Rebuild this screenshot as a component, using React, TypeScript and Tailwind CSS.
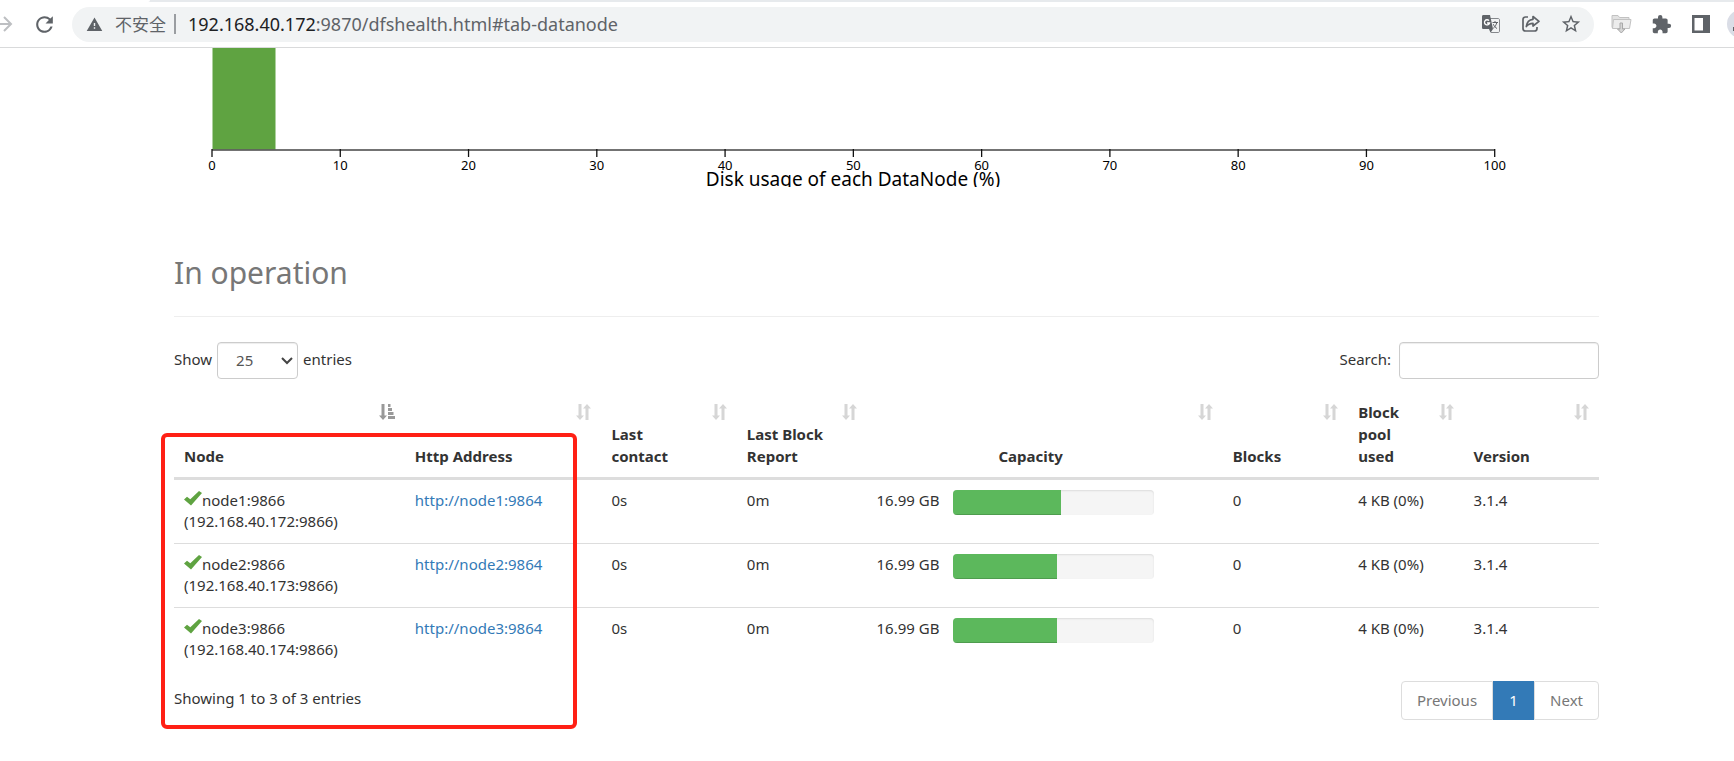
import React from "react";
import { MdExtension, MdRefresh, MdStarOutline, MdWarning } from "react-icons/md";

type NodeRow = { name: string; ip: string; used: number };

const nodes: NodeRow[] = [
  { name: "node1", ip: "192.168.40.172", used: 54 },
  { name: "node2", ip: "192.168.40.173", used: 52 },
  { name: "node3", ip: "192.168.40.174", used: 52 },
];

const columns = [
  { label: "Node", width: "w-[16.2%]", sorted: true },
  { label: "Http Address", width: "w-[13.8%]" },
  { label: "Last contact", width: "w-[9.5%]" },
  { label: "Last Block Report", width: "w-[9.1%]" },
  { label: "Capacity", width: "w-[25%]", center: true },
  { label: "Blocks", width: "w-[8.8%]" },
  { label: "Block pool used", width: "w-[8.1%]" },
  { label: "Version", width: "w-[9.5%]" },
];

function ForwardIcon() {
  return (
    <svg width="14" height="18" viewBox="0 0 14 18" fill="none" stroke="#bdbfc2" strokeWidth="2">
      <path d="M0 9h11M4 2l7 7-7 7" />
    </svg>
  );
}

function TranslateIcon() {
  return (
    <svg width="18" height="18" viewBox="0 0 18 18" fill="none">
      <path d="M8 3.500h8c1 0 1.500.5 1.500 1.500v11c0 1-.5 1.500-1.500 1.500H9" stroke="#85888c" />
      <path d="M1.500 0H8l3 14H1.500C.5 14 0 13.500 0 12.500v-11C0 .5.500 0 1.500 0z" fill="#5f6368" />
      <path d="M7 14h4l-2.500 3.800z" fill="#5f6368" />
      <path d="M7 5.600A2.600 2.600 0 1 0 7.600 8H5" stroke="#fff" strokeWidth="1.300" />
      <path d="M10.500 7.500H16M13 6v1.500M14.800 7.500C14.200 10 13 12 11.200 13.300M11.300 9.200c.7 1.800 2 3.300 3.700 4.300" stroke="#5f6368" />
    </svg>
  );
}

function ShareIcon() {
  return (
    <svg width="18" height="18" viewBox="0 0 18 18" fill="none" stroke="#5f6368" strokeWidth="1.700" strokeLinejoin="round">
      <path d="M6 2H3.500C2 2 1 3 1 4.500v9C1 15.200 2 16 3.500 16h9c1.500 0 2.500-.8 2.500-2.500V12" />
      <path d="M11 1.500 17 6.300 11 11V8.300C8 8.300 6 9.200 4.300 11.500 4.800 7.500 7 4.700 11 4.300Z" />
    </svg>
  );
}

function FolderDownloadIcon() {
  return (
    <svg width="21" height="20" viewBox="0 0 21 20">
      <path d="M1 1.500h6l1.500 2H18v10H1z" fill="#e2e2e2" stroke="#c2c2c2" />
      <path d="M2.500 5.500H20l-1.500 9H1.500z" fill="#ececec" stroke="#c2c2c2" />
      <path d="M9 9h2.500v6H14l-3.700 4L6.500 15H9z" fill="#d5d5d5" stroke="#a8a8a8" />
    </svg>
  );
}

function SidePanelIcon() {
  return (
    <svg width="18" height="18" viewBox="0 0 18 18">
      <path fillRule="evenodd" d="M0 0h18v18H0zM2.500 3v12.500H11V3z" fill="#5f6368" />
    </svg>
  );
}

function SortIcon() {
  return (
    <svg width="15" height="16" viewBox="0 0 15 16" fill="#d6d6d6">
      <path d="M2.500 0h3v11.500H8L4 16 0 11.500h2.500z" />
      <path d="M9.500 16h3V4.500H15L11 0 7 4.500h2.500z" />
    </svg>
  );
}

function SortedIcon() {
  return (
    <svg width="16" height="16" viewBox="0 0 16 16" fill="#999">
      <path d="M2.500 0h3v11.500H8L4 16 0 11.500h2.500z" />
      <path d="M9 0h2.500v3H9zM9 4h4v3H9zM9 8h5.500v3H9zM9 12h7v3H9z" />
    </svg>
  );
}

function CheckIcon() {
  return (
    <svg className="inline-block align-baseline" width="18" height="15" viewBox="0 0 18 15">
      <path d="M0 8.500 3 5.700 6.300 8.300 15 0 18 2 7 14.500z" fill="#5fa341" />
    </svg>
  );
}

function BrowserBar() {
  return (
    <header className="overflow-hidden">
      <div className="h-[2px] bg-[#e7eaed]">
        <div className="h-full w-[150px] rounded-br bg-white" />
      </div>
      <div className="flex h-[46px] items-center border-b border-[#d9dadb] bg-white pb-px text-[#5f6368]">
        <button aria-label="Forward" className="w-[14px] shrink-0">
          <ForwardIcon />
        </button>
        <button aria-label="Reload" className="flex w-[58px] shrink-0 justify-center pl-[2px]">
          <MdRefresh size={25} />
        </button>
        <div className="flex h-[35px] min-w-0 flex-1 items-center rounded-full bg-[#f1f3f4] pr-[3px] pl-[14px]">
          <MdWarning size={17} />
          <span className="ml-3 shrink-0 text-[17px]">不安全</span>
          <span className="mx-2 h-5 w-[2px] shrink-0 bg-[#9a9da1]" />
          <span className="ml-1 min-w-0 flex-1 truncate text-[18px] leading-[29px]">
            <span className="text-[#202124]">192.168.40.172</span>:9870/dfshealth.html#tab-datanode
          </span>
          <button aria-label="Translate" className="flex w-10 justify-center">
            <TranslateIcon />
          </button>
          <button aria-label="Share" className="flex w-10 justify-center">
            <ShareIcon />
          </button>
          <button aria-label="Bookmark" className="flex w-10 justify-center">
            <MdStarOutline size={22} />
          </button>
        </div>
        <div className="flex shrink-0 items-center pl-[7px]">
          <button aria-label="Downloads" className="flex w-10 justify-center">
            <FolderDownloadIcon />
          </button>
          <button aria-label="Extensions" className="flex w-10 justify-center">
            <MdExtension size={21} />
          </button>
          <button aria-label="Side panel" className="flex w-10 justify-center">
            <SidePanelIcon />
          </button>
          <button aria-label="Profile" className="ml-[6px] h-7 w-[7px] overflow-hidden">
            <svg className="max-w-none" width="28" height="28" viewBox="0 0 28 28">
              <circle cx="14" cy="14" r="14" fill="#dadde6" />
              <path d="M6 17h5v4H6z" fill="#5f6368" />
            </svg>
          </button>
        </div>
      </div>
    </header>
  );
}

function UsageChart() {
  const ticks = [0, 10, 20, 30, 40, 50, 60, 70, 80, 90, 100];
  return (
    <svg className="block w-full overflow-hidden" viewBox="0 0 1425 139" role="img" aria-label="Disk usage histogram">
      <rect x="38.500" y="0" width="63" height="101.500" fill="#5fa341" />
      <path d="M38 102H1321" stroke="#444" strokeWidth="1.500" />
      {ticks.map((t) => (
        <g key={t}>
          <path d={`M${38 + t * 12.827} 101v8`} stroke="#111" strokeWidth="1.300" />
          <text x={38 + t * 12.827} y="122" textAnchor="middle" className="fill-black text-[13px]">
            {t}
          </text>
        </g>
      ))}
      <text x="679" y="138" textAnchor="middle" className="fill-black text-[19px]">
        Disk usage of each DataNode (%)
      </text>
    </svg>
  );
}

function NodeTable() {
  return (
    <table className="w-full table-fixed border-collapse text-left">
      <thead>
        <tr className="h-[86px] border-b-[3px] border-[#ddd]">
          {columns.map((c) => (
            <th
              key={c.label}
              className={`${c.width} relative pr-[38px] pb-[10px] pl-[10px] align-bottom leading-[22px] font-bold`}
            >
              <div className={c.center ? "text-center" : ""}>{c.label}</div>
              <button aria-label={`Sort by ${c.label}`} className="absolute top-[12px] right-[10px]">
                {c.sorted ? <SortedIcon /> : <SortIcon />}
              </button>
            </th>
          ))}
        </tr>
      </thead>
      <tbody>
        {nodes.map((n) => (
          <tr key={n.name} className="h-16 border-b border-[#ddd] align-top first:h-[65px] last:border-b-0">
            <td className="px-[10px] pt-[10px]">
              <CheckIcon />
              {n.name}:9866
              <br />({n.ip}:9866)
            </td>
            <td className="px-[10px] pt-[10px]">
              <a href={`http://${n.name}:9864`} className="text-[#337ab7]">
                http://{n.name}:9864
              </a>
            </td>
            <td className="px-[10px] pt-[10px]">0s</td>
            <td className="px-[10px] pt-[10px]">0m</td>
            <td className="px-[10px] pt-[10px]">
              <div className="flex">
                <span className="w-[76px] shrink-0 whitespace-nowrap">16.99 GB</span>
                <div className="h-[25px] w-[201px] overflow-hidden rounded bg-[#f5f5f5] shadow-[inset_0_1px_2px_rgba(0,0,0,0.1)]">
                  <div
                    className="h-full bg-[#5cb85c] shadow-[inset_0_-1px_0_rgba(0,0,0,0.15)]"
                    style={{ width: `${n.used}%` }}
                  />
                </div>
              </div>
            </td>
            <td className="px-[10px] pt-[10px]">0</td>
            <td className="px-[10px] pt-[10px] whitespace-nowrap">4 KB (0%)</td>
            <td className="px-[10px] pt-[10px]">3.1.4</td>
          </tr>
        ))}
      </tbody>
    </table>
  );
}

export default function App() {
  return (
    <div className="min-h-screen bg-white font-['Noto_Sans','Noto_Sans_CJK_SC',sans-serif] text-[15px] leading-[21px] text-[#333]">
      <BrowserBar />
      <main className="pr-[135px] pl-[174px]">
        <UsageChart />
        <h2 className="mt-[67px] border-b border-[#eee] pb-[25px] text-[30px] leading-[37px] text-[#777]">In operation</h2>

        <div className="mt-[25px] flex items-start justify-between">
          <label className="flex items-start gap-[5px]">
            <span className="pt-[7px]">Show</span>
            <span className="relative">
              <select
                defaultValue="25"
                className="block h-[37px] w-[81px] appearance-none rounded border border-[#ccc] bg-white pl-[18px] text-[#555] shadow-[inset_0_1px_1px_rgba(0,0,0,0.075)]"
              >
                <option>25</option>
                <option>50</option>
                <option>100</option>
              </select>
              <svg
                className="pointer-events-none absolute top-[15px] right-[5px]"
                width="12"
                height="8"
                viewBox="0 0 12 8"
                fill="none"
                stroke="#444"
                strokeWidth="2"
              >
                <path d="m1 1 5 5 5-5" />
              </svg>
            </span>
            <span className="pt-[7px]">entries</span>
          </label>
          <label className="flex items-start gap-2">
            <span className="pt-[7px]">Search:</span>
            <input
              type="search"
              className="block h-[37px] w-[200px] rounded border border-[#ccc] px-3 shadow-[inset_0_1px_1px_rgba(0,0,0,0.075)]"
            />
          </label>
        </div>

        <div className="relative mt-[13px]">
          <NodeTable />
          <div className="flex items-start justify-between pt-[10px]">
            <p className="pt-[7px]">Showing 1 to 3 of 3 entries</p>
            <nav aria-label="Pagination" className="flex h-[39px] text-[#777]">
              <button className="rounded-l border border-[#ddd] px-[15px]">Previous</button>
              <button className="w-[41px] bg-[#337ab7] text-white">1</button>
              <button className="rounded-r border border-[#ddd] px-[15px]">Next</button>
            </nav>
          </div>
          <div className="pointer-events-none absolute top-[41px] -left-[13px] h-[296px] w-[416px] rounded-md border-4 border-[#ff2015]" />
        </div>
      </main>
    </div>
  );
}
